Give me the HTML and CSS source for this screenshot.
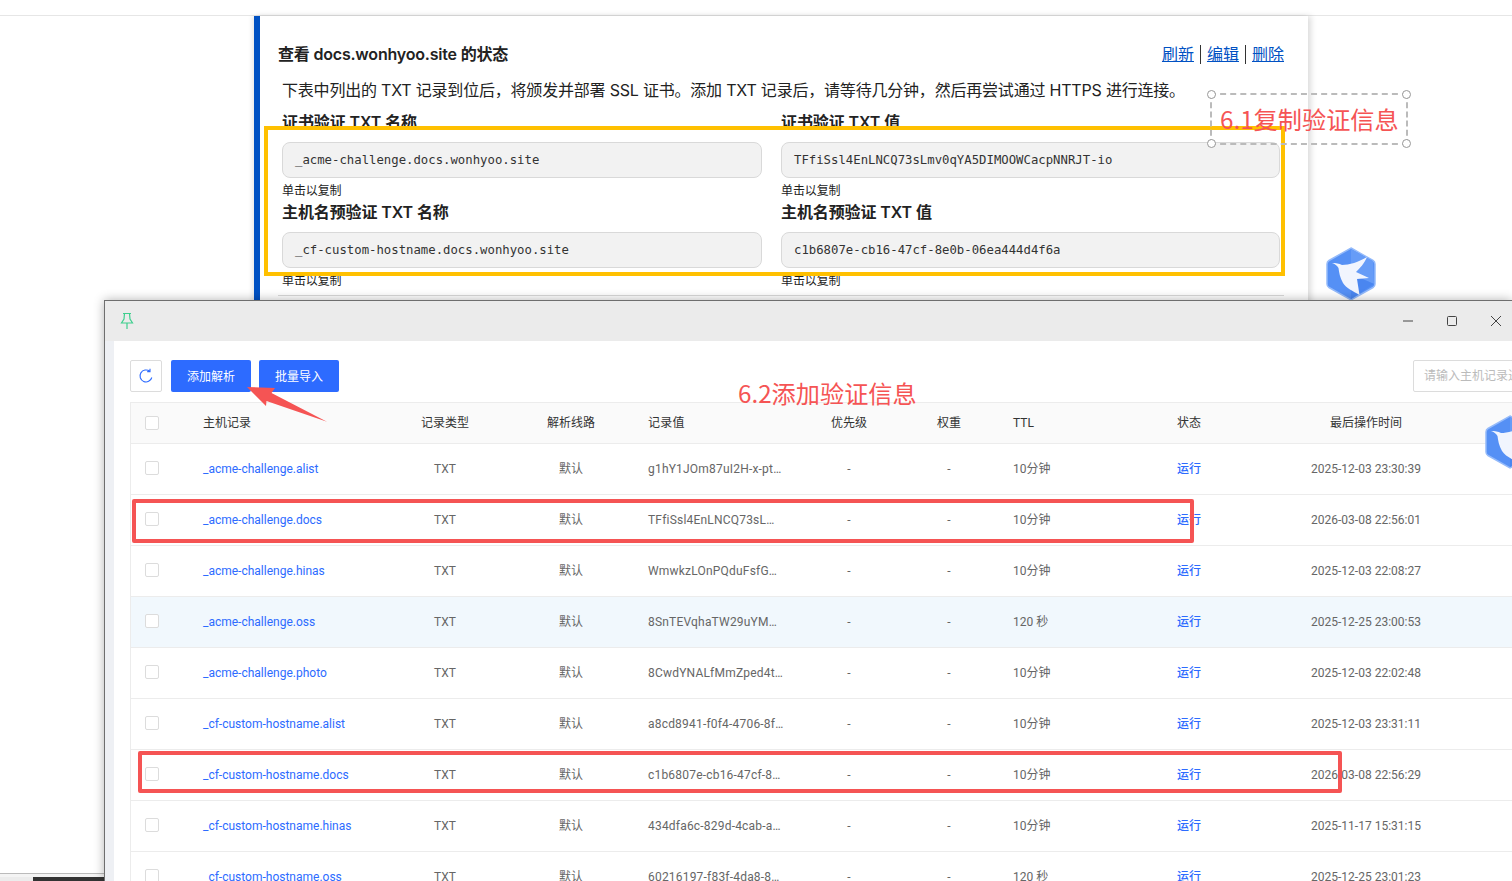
FILE: index.html
```html
<!DOCTYPE html>
<html lang="zh-CN">
<head>
  <meta charset="UTF-8">
  <title>docs.wonhyoo.site 验证</title>
  <meta name="viewport" content="width=device-width, initial-scale=1.0">
  <link rel="stylesheet" href="styles.css">
</head>
<body>
  <svg class="defs" width="0" height="0">
    <symbol id="bird" viewBox="0 0 50 54">
      <path d="M25 1 47 13.500Q49 14.700 49 17V37Q49 39.300 47 40.500L25 53 3 40.500Q1 39.300 1 37V17Q1 14.700 3 13.500Z" fill="#5590f5" stroke="#94bafa" stroke-width="1.500"/>
      <path d="M25 2 47 14 48 37 25 27Z" fill="#669cf7"/>
      <path d="M25 27 48 37 25 52Z" fill="#4a86f0"/>
      <path d="M6 16C10 16 13 16.500 16 18 23 18 33 15 41 10 38 17 34 21 30 25L43 31 31 32 33.500 48C27 44 20 41 17 36 14 31 13 25 12.500 21 11 18.500 9 17 6 16Z" fill="#f1f5fe"/>
    </symbol>
  </svg>

  <div class="topline"></div>

  <!-- page behind -->
  <section class="status-panel">
    <div class="status-head">
      <h2>查看 docs.wonhyoo.site 的状态</h2>
      <div class="status-links">
        <a href="#">刷新</a><span class="sep"></span><a href="#">编辑</a><span class="sep"></span><a href="#">删除</a>
      </div>
    </div>
    <p class="status-desc">下表中列出的 TXT 记录到位后，将颁发并部署 SSL 证书。添加 TXT 记录后，请等待几分钟，然后再尝试通过 HTTPS 进行连接。</p>
    <div class="fields">
      <div class="field">
        <h3>证书验证 TXT 名称</h3>
        <div class="copy-box">_acme-challenge.docs.wonhyoo.site</div>
        <small>单击以复制</small>
      </div>
      <div class="field">
        <h3>证书验证 TXT 值</h3>
        <div class="copy-box">TFfiSsl4EnLNCQ73sLmv0qYA5DIMOOWCacpNNRJT-io</div>
        <small>单击以复制</small>
      </div>
      <div class="field">
        <h3>主机名预验证 TXT 名称</h3>
        <div class="copy-box">_cf-custom-hostname.docs.wonhyoo.site</div>
        <small>单击以复制</small>
      </div>
      <div class="field">
        <h3>主机名预验证 TXT 值</h3>
        <div class="copy-box">c1b6807e-cb16-47cf-8e0b-06ea444d4f6a</div>
        <small>单击以复制</small>
      </div>
    </div>
    <hr class="status-rule">
  </section>

  <svg class="logo logo-back"><use href="#bird"/></svg>

  <div class="taskbar"><span class="task-light"></span><span class="task-dark"></span></div>

  <!-- dns window in front -->
  <section class="dns-window">
    <header class="titlebar">
      <svg class="pin" width="14" height="18" viewBox="0 0 14 18" fill="none" stroke="#3ecf8e" stroke-width="1.200">
        <path d="M3 1.500H11M4.500 1.500 4 7 1.500 11H12.500L10 7 9.500 1.500M7 11V17"/>
      </svg>
      <div class="win-btns">
        <svg width="12" height="12" viewBox="0 0 12 12" stroke="#444" fill="none"><path d="M1 6H11"/></svg>
        <svg width="12" height="12" viewBox="0 0 12 12" stroke="#444" fill="none"><rect x="1.500" y="1.500" width="9" height="9" rx="1"/></svg>
        <svg width="12" height="12" viewBox="0 0 12 12" stroke="#444" fill="none"><path d="M1 1 11 11M11 1 1 11"/></svg>
      </div>
    </header>
    <div class="win-body">
      <div class="toolbar">
        <button class="btn-icon">
          <svg width="16" height="16" viewBox="0 0 16 16" fill="none" stroke="#2d6bff" stroke-width="1.100">
            <path d="M13.800 9.500A6 6 0 1 1 11.800 3.300M12 .8V3.600H9.200"/>
          </svg>
        </button>
        <button class="btn-primary">添加解析</button>
        <button class="btn-primary">批量导入</button>
        <div class="search">请输入主机记录进行搜索</div>
      </div>

      <div class="table">
        <div class="row head">
          <span><i class="check"></i></span><span>主机记录</span><span class="mid">记录类型</span><span class="mid">解析线路</span><span class="val">记录值</span><span class="mid">优先级</span><span class="mid">权重</span><span class="ttl">TTL</span><span class="state">状态</span><span class="mid">最后操作时间</span>
        </div>
        <div class="row">
          <span><i class="check"></i></span><a href="#">_acme-challenge.alist</a><span class="mid">TXT</span><span class="mid">默认</span><span class="val">g1hY1JOm87uI2H-x-pt…</span><span class="mid">-</span><span class="mid">-</span><span class="ttl">10分钟</span><a class="state" href="#">运行</a><span class="mid">2025-12-03 23:30:39</span>
        </div>
        <div class="row">
          <span><i class="check"></i></span><a href="#">_acme-challenge.docs</a><span class="mid">TXT</span><span class="mid">默认</span><span class="val">TFfiSsl4EnLNCQ73sL…</span><span class="mid">-</span><span class="mid">-</span><span class="ttl">10分钟</span><a class="state" href="#">运行</a><span class="mid">2026-03-08 22:56:01</span>
        </div>
        <div class="row">
          <span><i class="check"></i></span><a href="#">_acme-challenge.hinas</a><span class="mid">TXT</span><span class="mid">默认</span><span class="val">WmwkzLOnPQduFsfG…</span><span class="mid">-</span><span class="mid">-</span><span class="ttl">10分钟</span><a class="state" href="#">运行</a><span class="mid">2025-12-03 22:08:27</span>
        </div>
        <div class="row hover">
          <span><i class="check"></i></span><a href="#">_acme-challenge.oss</a><span class="mid">TXT</span><span class="mid">默认</span><span class="val">8SnTEVqhaTW29uYM…</span><span class="mid">-</span><span class="mid">-</span><span class="ttl">120 秒</span><a class="state" href="#">运行</a><span class="mid">2025-12-25 23:00:53</span>
        </div>
        <div class="row">
          <span><i class="check"></i></span><a href="#">_acme-challenge.photo</a><span class="mid">TXT</span><span class="mid">默认</span><span class="val">8CwdYNALfMmZped4t…</span><span class="mid">-</span><span class="mid">-</span><span class="ttl">10分钟</span><a class="state" href="#">运行</a><span class="mid">2025-12-03 22:02:48</span>
        </div>
        <div class="row">
          <span><i class="check"></i></span><a href="#">_cf-custom-hostname.alist</a><span class="mid">TXT</span><span class="mid">默认</span><span class="val">a8cd8941-f0f4-4706-8f…</span><span class="mid">-</span><span class="mid">-</span><span class="ttl">10分钟</span><a class="state" href="#">运行</a><span class="mid">2025-12-03 23:31:11</span>
        </div>
        <div class="row">
          <span><i class="check"></i></span><a href="#">_cf-custom-hostname.docs</a><span class="mid">TXT</span><span class="mid">默认</span><span class="val">c1b6807e-cb16-47cf-8…</span><span class="mid">-</span><span class="mid">-</span><span class="ttl">10分钟</span><a class="state" href="#">运行</a><span class="mid">2026-03-08 22:56:29</span>
        </div>
        <div class="row">
          <span><i class="check"></i></span><a href="#">_cf-custom-hostname.hinas</a><span class="mid">TXT</span><span class="mid">默认</span><span class="val">434dfa6c-829d-4cab-a…</span><span class="mid">-</span><span class="mid">-</span><span class="ttl">10分钟</span><a class="state" href="#">运行</a><span class="mid">2025-11-17 15:31:15</span>
        </div>
        <div class="row">
          <span><i class="check"></i></span><a href="#">_cf-custom-hostname.oss</a><span class="mid">TXT</span><span class="mid">默认</span><span class="val">60216197-f83f-4da8-8…</span><span class="mid">-</span><span class="mid">-</span><span class="ttl">120 秒</span><a class="state" href="#">运行</a><span class="mid">2025-12-25 23:01:23</span>
        </div>
      </div>
    </div>
  </section>

  <svg class="logo logo-front" viewBox="0 0 27 54"><use href="#bird" width="50" height="54"/></svg>

  <!-- annotations drawn over the screenshot -->
  <div class="mark mark-yellow"></div>
  <div class="note-box">
    <i class="handle tl"></i><i class="handle tr"></i><i class="handle bl"></i><i class="handle br"></i>
    6.1复制验证信息
  </div>
  <div class="note note-add">6.2添加验证信息</div>
  <div class="mark mark-red mark-docs"></div>
  <div class="mark mark-red mark-cf"></div>
  <svg class="arrow" width="90" height="45" viewBox="0 0 90 45">
    <path d="M2 2 30 3 26.500 8 82 36.700 21.500 16 21 21Z" fill="#f55454"/>
  </svg>
</body>
</html>
```

FILE: styles.css
```css
* {
  margin: 0;
  padding: 0;
  box-sizing: border-box;
}

html, body {
  width: 1512px;
  height: 881px;
  overflow: hidden;
  background: #fff;
}

body {
  position: relative;
  font-family: Roboto, "Noto Sans CJK SC", sans-serif;
  font-size: 12px;
  color: #333;
}

.defs {
  position: absolute;
}

.topline {
  height: 16px;
  border-bottom: 1px solid #e6e6e6;
}

/* Page behind */
.status-panel {
  position: absolute;
  left: 254px;
  top: 16px;
  width: 1054px;
  height: 300px;
  padding: 26px 24px 0 18px;
  background: #fff;
  border-left: 6px solid #0051c3;
  box-shadow: 3px 0 6px rgba(0, 0, 0, 0.14), -3px 0 4px rgba(0, 0, 0, 0.06);
  font-family: Inter, "Noto Sans CJK SC", sans-serif;
  color: #222;
}

.status-head {
  display: flex;
  justify-content: space-between;
  align-items: center;
  height: 24px;
  line-height: 22px;
}

.status-head h2 {
  font-size: 16px;
  font-weight: 600;
  letter-spacing: -0.2px;
}

.status-links {
  display: flex;
  align-items: center;
  gap: 6px;
  margin-top: 1px;
  font-size: 16px;
}

.status-links a {
  color: #0051c3;
  line-height: 19px;
}

.sep {
  width: 1px;
  height: 19px;
  background: #333;
}

.status-desc {
  margin: 12px 0 0 4px;
  font-size: 16px;
  line-height: 24px;
  white-space: nowrap;
  letter-spacing: -0.2px;
}

.fields {
  display: grid;
  grid-template-columns: 480px 499px;
  column-gap: 19px;
  margin: 8px 0 0 4px;
}

.field h3 {
  font-size: 16px;
  font-weight: 600;
  line-height: 24px;
  margin-bottom: 8px;
  letter-spacing: -0.1px;
}

.copy-box {
  height: 36px;
  padding: 0 12px;
  line-height: 34px;
  background: #f2f2f2;
  border: 1px solid #d9d9d9;
  border-radius: 8px;
  font-family: "DejaVu Sans Mono", monospace;
  font-size: 12.3px;
  color: #333;
}

.field small {
  display: block;
  height: 22px;
  font-size: 12px;
  line-height: 25px;
  letter-spacing: -0.1px;
}

.status-rule {
  margin-top: 5px;
  border: 0;
  border-top: 1px solid #d9d9d9;
}

.logo {
  position: absolute;
  width: 50px;
  height: 54px;
}

.logo-back {
  left: 1326px;
  top: 247px;
}

.logo-front {
  left: 1485px;
  top: 415px;
  width: 27px;
}

.taskbar {
  position: absolute;
  left: 0;
  bottom: 0;
  width: 105px;
  height: 8px;
  border-top: 1px solid #bbb;
  display: flex;
  align-items: flex-end;
  background: #f4f4f4;
}

.task-light {
  width: 33px;
  height: 4px;
  background: #ececec;
}

.task-dark {
  width: 72px;
  height: 4px;
  background: #333;
}

/* DNS window */
.dns-window {
  position: absolute;
  left: 104px;
  top: 300px;
  width: 1408px;
  height: 581px;
  overflow: hidden;
  background: #eef0f4;
  border: 1px solid #6e6e6e;
  border-width: 1px 0 0 1px;
  box-shadow: 0 0 10px rgba(0, 0, 0, 0.3);
}

.titlebar {
  height: 40px;
  display: flex;
  align-items: center;
  justify-content: space-between;
  padding-left: 15px;
  background: #ebebeb;
}

.win-btns {
  display: flex;
  gap: 32px;
  margin-right: 10px;
}

.win-body {
  height: 540px;
  margin-left: 9px;
  padding: 19px 0 0 16px;
  background: #fff;
}

.toolbar {
  display: flex;
  align-items: center;
  gap: 8px;
  height: 32px;
}

.btn-icon {
  flex: none;
  display: flex;
  align-items: center;
  justify-content: center;
  width: 32px;
  height: 32px;
  margin-right: 1px;
  background: #fff;
  border: 1px solid #dcdcdc;
  border-radius: 2px;
}

.btn-primary {
  flex: none;
  width: 80px;
  height: 32px;
  padding-bottom: 2px;
  background: #2d6bff;
  border: 0;
  border-radius: 2px;
  font-family: inherit;
  font-size: 12px;
  color: #fff;
}

.search {
  flex: none;
  width: 200px;
  height: 32px;
  margin-left: 1066px;
  padding-left: 10px;
  line-height: 30px;
  border: 1px solid #dcdcdc;
  border-radius: 2px;
  color: #bbb;
  white-space: nowrap;
}

.table {
  margin-top: 10px;
  width: 1400px;
  border-left: 1px solid #ececec;
  border-top: 1px solid #ececec;
}

.row {
  display: grid;
  grid-template-columns: 72px 182px 120px 132px 153px 118px 82px 175px 90px 222px;
  align-items: center;
  height: 51px;
  line-height: 16px;
  border-bottom: 1px solid #ececec;
  color: #666;
}

.row.head {
  height: 41px;
  background: #fafafa;
  color: #333;
}

.row.hover {
  background: #f1f8fd;
}

.row a {
  color: #2d6bff;
  text-decoration: none;
}

.row a.state {
  font-weight: 500;
}

.check {
  display: block;
  width: 14px;
  height: 14px;
  margin: 0 0 2px 14px;
  background: #fff;
  border: 1px solid #dcdcdc;
  border-radius: 2px;
}

.head .check {
  margin-bottom: 0;
}

.mid {
  text-align: center;
}

.val {
  padding-left: 11px;
  white-space: nowrap;
  letter-spacing: 0.2px;
}

.ttl {
  padding-left: 23px;
}

.state {
  padding-left: 12px;
}

/* Annotations */
.mark {
  position: absolute;
}

.mark-yellow {
  left: 264px;
  top: 126px;
  width: 1021px;
  height: 150px;
  border: 4px solid #ffc000;
}

.mark-red {
  border: 4px solid #f55454;
  border-radius: 2px;
}

.mark-docs {
  left: 132px;
  top: 499px;
  width: 1062px;
  height: 44px;
}

.mark-cf {
  left: 138px;
  top: 751px;
  width: 1204px;
  height: 42px;
}

.note-box,
.note-add {
  position: absolute;
  font-family: "Noto Sans CJK SC", sans-serif;
  font-size: 24.2px;
  font-weight: 400;
  color: #f55454;
  white-space: nowrap;
}

.note-box {
  left: 1210px;
  top: 93px;
  width: 198px;
  height: 52px;
  padding-left: 8px;
  line-height: 48px;
  border: 2px dashed #bbb;
}

.note-add {
  left: 738px;
  top: 375px;
  line-height: 36px;
}

.handle {
  position: absolute;
  width: 9px;
  height: 9px;
  background: #fff;
  border: 1px solid #999;
  border-radius: 50%;
}

.tl { left: -5px; top: -5px; }
.tr { right: -5px; top: -5px; }
.bl { left: -5px; bottom: -5px; }
.br { right: -5px; bottom: -5px; }

.arrow {
  position: absolute;
  left: 245px;
  top: 385px;
}
```
